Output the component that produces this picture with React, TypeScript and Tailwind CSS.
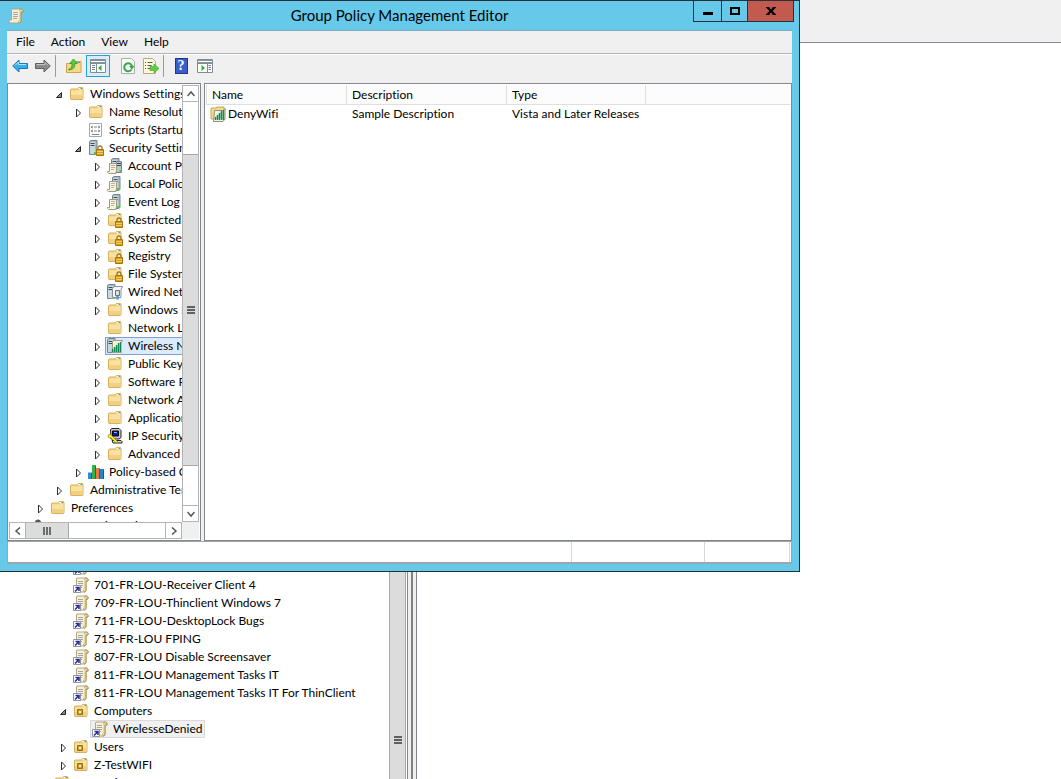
import type { ReactNode } from "react";

type IconName =
  | "folder" | "folderLock" | "script" | "security" | "account" | "server" | "wired"
  | "wireless" | "ipsec" | "qos" | "user" | "gpo" | "ou" | "scroll" | "wifiPolicy";

type Node = {
  label: string;
  icon: IconName;
  level: number;
  state?: "open" | "closed";
  selected?: boolean;
};

const Folder = () => (
  <>
    <path d="M1.500 3.500 2 3h6.500l1-1.500h4l.5 1.500V13l-.5.5H2l-.5-.5z" fill="#f3d582" stroke="#d8b05c" />
    <path d="M2 4.500h7.500l1-1H13.500V13H2z" fill="#f9e1a0" />
    <path d="M2 9h11.500v4H2z" fill="#f1d083" />
    <path d="M9.500 2h4v1h-4z" fill="#fffbe9" />
    <path d="M11.500 2h2v1h-2z" fill="#3c9be8" />
  </>
);

const Lock = () => (
  <>
    <path d="M10 10V8a2 2 0 0 1 4 0v2" fill="none" stroke="#a27a24" strokeWidth="1.300" />
    <path d="M8.500 9.500h7v6h-7z" fill="#d69b1c" stroke="#a8740c" />
    <path d="M9 11.500h6M9 13.500h6" stroke="#f3cf66" />
  </>
);

const Server = ({ x }: { x: number }) => (
  <g transform={`translate(${x} 0)`}>
    <path d="M.5 1.500 2 .5h6v13l-1.500 1h-6z" fill="#a9b9c5" stroke="#748591" />
    <path d="M1 2h5v12H1z" fill="#c9d7df" />
    <path d="M1.500 3.500h4M1.500 5.500h4" stroke="#394c5a" />
    <path d="M5 12h2v2H5z" fill="#35dc2e" />
  </g>
);

const Sheet = () => (
  <>
    <path d="M2.500 5.500h7v8H9v2H1.500l-1-1v-1h2z" fill="#f8f3df" stroke="#a09a82" />
    <path d="M4 7.500h4M4 9.500h4M4 11.500h3" stroke="#b9b39b" />
  </>
);

const Scroll = () => (
  <>
    <path d="M4 1h9.500l1.500 1v2h-2v9.500l-1 1.500H2l-1-1v-2h2.500V2z" fill="#f8f1d9" stroke="#b3a67c" />
    <path d="M11.500 2.500c0-2 3.500-2 3.500 0V4h-2v9c0 2.500-2.500 2.500-2.500.5" fill="#e5d6a0" stroke="#aa9557" />
    <path d="M5 4.500h5M5 6.500h5M5 8.500h5M5 10.500h4" stroke="#a3a3a3" />
  </>
);

const Bars = () => (
  <path d="M5.500 14v-3M7.500 14v-5M9.500 14V7M11.500 14V5M13.500 14V4" stroke="#188653" strokeWidth="1.400" />
);

const drawings: Record<IconName, ReactNode> = {
  folder: <Folder />,
  folderLock: <><Folder /><Lock /></>,
  script: (
    <>
      <path d="M1.500 1.500h12v13h-12z" fill="#fff" stroke="#a4a7ab" />
      <path d="M5 4 3 5l2 1m5-2 2 1-2 1M5 8 3 9l2 1m5-2 2 1-2 1M6 5h3M6 9h3M4 12.500h7" fill="none" stroke="#74787e" strokeWidth=".9" />
    </>
  ),
  security: <><Server x={1} /><Lock /></>,
  account: (
    <>
      <Server x={4} />
      <path d="M9.500 3.500h5v11h-5z" fill="#b8c8d2" stroke="#748591" />
      <path d="M10 5.500h4M10 7.500h4" stroke="#394c5a" />
      <path d="M12.500 12h2v2h-2z" fill="#35dc2e" />
      <Sheet />
    </>
  ),
  server: <><Server x={5} /><Sheet /></>,
  wired: (
    <>
      <Server x={0} />
      <path d="M5.500 4.500 7 2.500h8.500l-1.500 3v8H5.500z" fill="#f7f7f3" stroke="#8a9299" />
      <path d="M8.500 6.500h4v5h-4z" fill="#d5e3ec" stroke="#62717e" />
      <path d="M10.500 12v3.500" stroke="#4c9bd0" strokeWidth="2.500" />
      <path d="M3.500 14.500h5" stroke="#a5a28c" />
    </>
  ),
  wireless: (
    <>
      <Server x={0} />
      <path d="M5.500 3.500 7 2.500h8.500l-1 2v10h-9z" fill="#f5f3e2" stroke="#a29d80" />
      <path d="M5 13 15 4v10H5z" fill="#b9e2c4" />
      <Bars />
    </>
  ),
  wifiPolicy: (
    <>
      <path d="M1 2h5l1-1h7v12H1z" fill="#f5d98d" stroke="#c8a75d" />
      <path d="M4.500 4.500h9l1.500-2V13l-2 2.500H3.500z" fill="#f5f3e4" stroke="#8b907b" />
      <path d="M4 12 13 4v9H4z" fill="#b9e2c4" />
      <Bars />
    </>
  ),
  ipsec: (
    <>
      <path d="M3.500 1.500 5 .5h7l2 2v7l-2 1.500H4z" fill="#c9c9c9" stroke="#222" />
      <path d="M5.500 3h6v5h-6z" fill="#1616b8" stroke="#000" />
      <path d="M7 4.500h3" stroke="#5cc3ff" />
      <path d="M5 12.500h9l1 1v1.500H6z" fill="#dadada" stroke="#222" />
      <path d="m1 7 3-.5 1.500 2L11 14l-2 .7L4 10 1.500 9.500z" fill="#ffee20" stroke="#8c7c00" strokeWidth=".6" />
    </>
  ),
  qos: (
    <>
      <path d="M0 8.500h4V15H0z" fill="#2d8fd2" />
      <path d="M4 1h4v14H4z" fill="#35b34a" />
      <path d="M8 4h4v11H8z" fill="#ef7744" />
      <path d="M12 5h4v10h-4z" fill="#2286cf" />
      <path d="M3.500 9v6M7.500 2v13M11.500 5v10M15.500 6v9" stroke="#24445a" strokeOpacity=".7" />
    </>
  ),
  user: (
    <>
      <circle cx="7" cy="4.500" r="3" fill="#585858" />
      <path d="M2 15c0-9 11-9 11 0z" fill="#7492ac" />
    </>
  ),
  gpo: (
    <>
      <Scroll />
      <path d="M.5 8.500h7v7h-7z" fill="#fff" stroke="#8f94a4" />
      <path d="M2.500 10.500H6V14M5.500 11 2 14.500" fill="none" stroke="#29298c" strokeWidth="1.500" />
    </>
  ),
  ou: (
    <>
      <Folder />
      <path d="M4.500 6.500h5v5h-5z" fill="#c99d30" stroke="#92711b" />
      <path d="M6 8h2v2H6z" fill="#fff1b8" />
    </>
  ),
  scroll: <Scroll />,
};

function Icon({ name }: { name: IconName }) {
  return (
    <svg viewBox="0 0 16 16" className="size-4 shrink-0" aria-hidden="true">
      {drawings[name]}
    </svg>
  );
}

const policyTree: Node[] = [
  { label: "Windows Settings", icon: "folder", level: 2, state: "open" },
  { label: "Name Resolution Policy", icon: "folder", level: 3, state: "closed" },
  { label: "Scripts (Startup/Shutdown)", icon: "script", level: 3 },
  { label: "Security Settings", icon: "security", level: 3, state: "open" },
  { label: "Account Policies", icon: "account", level: 4, state: "closed" },
  { label: "Local Policies", icon: "server", level: 4, state: "closed" },
  { label: "Event Log", icon: "server", level: 4, state: "closed" },
  { label: "Restricted Groups", icon: "folderLock", level: 4, state: "closed" },
  { label: "System Services", icon: "folderLock", level: 4, state: "closed" },
  { label: "Registry", icon: "folderLock", level: 4, state: "closed" },
  { label: "File System", icon: "folderLock", level: 4, state: "closed" },
  { label: "Wired Network", icon: "wired", level: 4, state: "closed" },
  { label: "Windows Firewall", icon: "folder", level: 4, state: "closed" },
  { label: "Network List Manager", icon: "folder", level: 4 },
  { label: "Wireless Network", icon: "wireless", level: 4, state: "closed", selected: true },
  { label: "Public Key Policies", icon: "folder", level: 4, state: "closed" },
  { label: "Software Restriction", icon: "folder", level: 4, state: "closed" },
  { label: "Network Access", icon: "folder", level: 4, state: "closed" },
  { label: "Application Control", icon: "folder", level: 4, state: "closed" },
  { label: "IP Security Policies", icon: "ipsec", level: 4, state: "closed" },
  { label: "Advanced Audit", icon: "folder", level: 4, state: "closed" },
  { label: "Policy-based QoS", icon: "qos", level: 3, state: "closed" },
  { label: "Administrative Templates", icon: "folder", level: 2, state: "closed" },
  { label: "Preferences", icon: "folder", level: 1, state: "closed" },
  { label: "User Configuration", icon: "user", level: 0 },
];

const domainTree: Node[] = [
  { label: "", icon: "gpo", level: 3 },
  { label: "701-FR-LOU-Receiver Client 4", icon: "gpo", level: 3 },
  { label: "709-FR-LOU-Thinclient Windows 7", icon: "gpo", level: 3 },
  { label: "711-FR-LOU-DesktopLock Bugs", icon: "gpo", level: 3 },
  { label: "715-FR-LOU FPING", icon: "gpo", level: 3 },
  { label: "807-FR-LOU Disable Screensaver", icon: "gpo", level: 3 },
  { label: "811-FR-LOU Management Tasks IT", icon: "gpo", level: 3 },
  { label: "811-FR-LOU Management Tasks IT For ThinClient", icon: "gpo", level: 3 },
  { label: "Computers", icon: "ou", level: 3, state: "open" },
  { label: "WirelesseDenied", icon: "gpo", level: 4, selected: true },
  { label: "Users", icon: "ou", level: 3, state: "closed" },
  { label: "Z-TestWIFI", icon: "ou", level: 3, state: "closed" },
  { label: "Ho-Business EMA", icon: "ou", level: 2 },
];

const indents = ["pl-[5px]", "pl-[24px]", "pl-[43px]", "pl-[62px]", "pl-[81px]"];

function Tree({ nodes, label, active }: { nodes: Node[]; label: string; active?: boolean }) {
  const highlight = active ? "border-[#7da2ce] bg-[#dcebfc]" : "border-[#d9d9d9] bg-[#f0f0f0]";
  return (
    <ul aria-label={label}>
      {nodes.map((n, i) => (
        <li key={i} className={`flex h-[18px] whitespace-nowrap ${indents[n.level]}`}>
          <span className="flex w-4 shrink-0 items-center justify-center pt-0.5">
            {n.state && (
              <button aria-label={`${n.state === "open" ? "Collapse" : "Expand"} ${n.label}`}>
                <svg viewBox="0 0 8 10" className="h-2.5 w-2 overflow-visible" aria-hidden="true">
                  {n.state === "open" ? (
                    <path d="M6.500 2.500v5h-5z" fill="#8b8b8b" stroke="#262626" />
                  ) : (
                    <path d="m2.500 1 4 4-4 4z" fill="#fff" stroke="#2f2f2f" />
                  )}
                </svg>
              </button>
            )}
          </span>
          <span className={`flex items-center gap-[5px] border pr-0.5 pl-px ${n.selected ? highlight : "border-transparent"}`}>
            <Icon name={n.icon} />
            {n.label}
          </span>
        </li>
      ))}
    </ul>
  );
}

function Chevron({ d }: { d: string }) {
  return (
    <svg viewBox="0 0 8 8" className="size-2" aria-hidden="true">
      <path d={d} fill="none" stroke="#555" strokeWidth="1.500" />
    </svg>
  );
}

function Grip({ vertical }: { vertical?: boolean }) {
  return (
    <svg viewBox="0 0 8 8" className="size-2" aria-hidden="true">
      <path d={vertical ? "M1 0v8M4 0v8M7 0v8" : "M0 1h8M0 4h8M0 7h8"} stroke="#606060" strokeWidth="1.800" />
    </svg>
  );
}

const tool = "flex h-[22px] items-center justify-center";

function Toolbar() {
  return (
    <div className="flex h-[29px] items-start border-t border-white bg-[#f0f0f0] pl-[5px]">
      <button className={tool} aria-label="Back">
        <svg viewBox="0 0 16 16" className="size-4"><path d="M.7 8 7 2v3.500h8.500v5H7V14z" fill="#36aeea" stroke="#2573b8" /><path d="M3 7.500 6.500 4v2.500H14" fill="none" stroke="#a5e3ff" /></svg>
      </button>
      <button className={`${tool} ml-[7px]`} aria-label="Forward">
        <svg viewBox="0 0 16 16" className="size-4"><path d="M15.300 8 9 2v3.500H.5v5H9V14z" fill="#8b8b8b" stroke="#5f5f5f" /><path d="M1.500 6.500H10V4.500L13 7.500" fill="none" stroke="#c4c4c4" /></svg>
      </button>
      <span className="ml-1 h-[22px] w-px bg-[#9b9b9b]" />
      <button className={`${tool} ml-2.5`} aria-label="Up One Level">
        <svg viewBox="0 0 16 16" className="size-4"><path d="M.5 5.500h7l1.500-2h6v11H.5z" fill="#f5d98b" stroke="#cfa64f" /><path d="M11.500 4.500h2.500" stroke="#3c9be8" /><path d="M2.500 11.500c3-1 3.500-3 3.500-6H3.500L7.500 1l4 4.500H9c0 4-2 6.500-6.500 6.500z" fill="#55cb35" stroke="#2a9424" strokeWidth=".7" /></svg>
      </button>
      <button className="ml-1 flex h-[22px] w-6 items-center justify-center border border-[#26a0da] bg-[#d9ecf9]" aria-label="Show/Hide Console Tree" aria-pressed="true">
        <svg viewBox="0 0 16 14" className="h-3.5 w-4"><path d="M.5.5h15v13H.5z" fill="#fff" stroke="#828b94" /><path d="M1 1.500h14M1 3.500h14" stroke="#8795a3" /><path d="M1 4.500h14M6.500 5v8" stroke="#828b94" /><path d="M2 6.500h3M2 8.500h3M2 10.500h3" stroke="#6e8296" /><path d="M11.500 6v6L8 9z" fill="#35ad2d" /></svg>
      </button>
      <button className={`${tool} ml-2.5`} aria-label="Refresh">
        <svg viewBox="0 0 16 16" className="size-4"><path d="M1.500.5h10l3 3v12h-13z" fill="#fdfdfd" stroke="#adadad" /><path d="M11.500 11.500A4 4 0 1 1 12 8" fill="none" stroke="#35a947" strokeWidth="2" /><path d="m9 8 5.500-.2-2.500 4z" fill="#35a947" /></svg>
      </button>
      <button className={`${tool} ml-[7px]`} aria-label="Export List">
        <svg viewBox="0 0 16 16" className="size-4"><path d="M.5.5h9l3 3v12H.5z" fill="#fff9dc" stroke="#b5aa87" /><path d="M2 4.500h1M2 7.500h1M2 10.500h1M4.500 4.500h5M4.500 7.500h4M4.500 10.500h3" stroke="#585858" /><path d="M7 8.500h4V6l5 4.500-5 4.500v-2.500H7z" fill="#63cd3f" stroke="#3d9e2a" strokeWidth=".6" /></svg>
      </button>
      <span className="ml-1 h-[22px] w-px bg-[#9b9b9b]" />
      <button className="ml-2.5 flex h-[22px] w-3.5 items-center justify-center" aria-label="Help">
        <span className="flex h-4 w-[13px] items-center justify-center border border-[#1f3591] bg-[#3a5fcd] font-['Liberation_Serif',serif] text-sm font-bold text-white">?</span>
      </button>
      <button className={`${tool} ml-[9px]`} aria-label="Show/Hide Action Pane">
        <svg viewBox="0 0 16 14" className="h-3.5 w-4"><path d="M.5.5h15v13H.5z" fill="#fff" stroke="#828b94" /><path d="M1 1.500h14M1 3.500h14" stroke="#8795a3" /><path d="M1 4.500h14M10.500 5v8" stroke="#828b94" /><path d="M11.500 6.500H14M11.500 8.500H14M11.500 10.500H14" stroke="#6e8296" /><path d="M4.500 6v6L8 9z" fill="#35ad2d" /></svg>
      </button>
    </div>
  );
}

function TreePane() {
  const arrow = "flex shrink-0 items-center justify-center border border-[#b4b4b4] bg-white";
  return (
    <nav className="grid w-[194px] shrink-0 grid-cols-[minmax(0,1fr)_17px] grid-rows-[minmax(0,1fr)_17px] border border-[#828790] bg-white pt-px pr-px pb-px">
      <div className="overflow-hidden">
        <Tree nodes={policyTree} label="Policy" active />
      </div>
      <div className="flex flex-col border-x border-[#b4b4b4] bg-white">
        <button className={`${arrow} h-[17px] border-x-0`} aria-label="Scroll up"><Chevron d="m.5 6 3.500-4 3.500 4" /></button>
        <div className="mt-[52px] flex h-[312px] items-center justify-center border-y border-[#a8a8a8] bg-[#dcdcdc]"><Grip /></div>
        <button className={`${arrow} mt-auto h-[17px] border-x-0`} aria-label="Scroll down"><Chevron d="m.5 2 3.500 4 3.500-4" /></button>
      </div>
      <div className="ml-px flex border-y border-[#b4b4b4]">
        <button className={`${arrow} w-[17px] border-y-0`} aria-label="Scroll left"><Chevron d="M6 .5 2 4l4 3.500" /></button>
        <div className="flex w-[43px] items-center justify-center border-r border-[#a8a8a8] bg-[#dcdcdc]"><Grip vertical /></div>
        <button className={`${arrow} ml-auto w-[17px] border-y-0`} aria-label="Scroll right"><Chevron d="m2 .5 4 3.500-4 3.500" /></button>
      </div>
      <div className="bg-[#f0f0f0]" />
    </nav>
  );
}

function PolicyList() {
  const head = "h-5 border-r border-b border-[#dfdfdf] pl-[5px] text-left font-normal";
  return (
    <div className="min-w-0 flex-1 border border-[#828790] bg-white p-px">
      <table className="w-full table-fixed border-separate border-spacing-0">
        <thead className="bg-[#fcfcfc]">
          <tr>
            <th className={`${head} w-[141px] border-l`}>Name</th>
            <th className={`${head} w-[160px]`}>Description</th>
            <th className={`${head} w-[139px]`}>Type</th>
            <th className="border-b border-[#dfdfdf]" />
          </tr>
        </thead>
        <tbody>
          <tr className="h-[18px]">
            <td className="p-0 pl-1"><span className="flex items-center gap-0.5"><Icon name="wifiPolicy" />DenyWifi</span></td>
            <td className="p-0 pl-[5px]">Sample Description</td>
            <td className="p-0 pl-[5px]">Vista and Later Releases</td>
            <td />
          </tr>
        </tbody>
      </table>
    </div>
  );
}

function EditorWindow() {
  const caption = "flex h-[21px] items-center justify-center border border-t-0 border-[#27303c]";
  return (
    <section className="absolute top-0 left-0 flex h-[572px] w-[800px] flex-col border border-l-0 border-[#2a2e38] bg-[#66c9e9]">
      <header className="grid h-[29px] grid-cols-[1fr_auto_1fr]">
        <div className="self-center pl-2"><Icon name="scroll" /></div>
        <h1 className="self-center pb-0.5 text-[15px] leading-5">Group Policy Management Editor</h1>
        <div className="mr-[5px] flex self-start justify-self-end">
          <button className={`${caption} w-7 border-r-0`} aria-label="Minimize"><span className="mt-1 h-[3px] w-2.5 bg-black" /></button>
          <button className={`${caption} w-[26px] border-r-0`} aria-label="Maximize"><span className="h-2 w-2.5 border-2 border-black" /></button>
          <button className={`${caption} w-[47px] bg-[#c35a50]`} aria-label="Close">
            <svg viewBox="0 0 10 8" className="h-2 w-2.5" aria-hidden="true"><path d="M1.500.5 8.500 7.500M8.500.5 1.500 7.500" stroke="#000" strokeWidth="2.200" /><path d="M0 .5h3.500M6.500.5H10M0 7.500h3.500M6.500 7.500H10" stroke="#000" /></svg>
          </button>
        </div>
      </header>
      <div className="mr-[7px] mb-[7px] ml-[7px] flex min-h-0 flex-1 flex-col border-t border-[#84a9bd] bg-[#f0f0f0]">
        <div className="flex h-[23px] items-center border-b border-[#b1b4bb] px-px">
          {["File", "Action", "View", "Help"].map((m) => (
            <button key={m} className="px-2">{m}</button>
          ))}
        </div>
        <Toolbar />
        <main className="flex min-h-0 flex-1 gap-[3px]">
          <TreePane />
          <PolicyList />
        </main>
        <footer className="flex h-[23px] border border-b-2 border-[#a0a3a8] bg-white">
          <span className="flex-1 border-r border-[#d7d7d7]" />
          <span className="w-[133px] border-r border-[#d7d7d7]" />
          <span className="mr-px w-[85px] border-r border-[#d7d7d7]" />
        </footer>
      </div>
    </section>
  );
}

export default function App() {
  return (
    <div className="relative flex h-screen flex-col overflow-hidden bg-white font-['Lato','Liberation_Sans',sans-serif] text-xs leading-4 text-black [font-variant-ligatures:none]">
      <div className="h-[43px] shrink-0 border-b border-[#8d8796] bg-[#f0f0f0]" />
      <div className="flex min-h-0 flex-1">
        <nav className="flex w-[408px] shrink-0 border-r border-[#828790]">
          <div className="min-w-0 flex-1 overflow-hidden pt-[515px]">
            <div className="-ml-[7px]"><Tree nodes={domainTree} label="Domain" /></div>
          </div>
          <div className="mr-px flex w-[17px] flex-col items-center justify-end border-x border-[#a8a8a8] bg-[#dcdcdc] pb-[35px]"><Grip /></div>
        </nav>
        <div className="flex w-2 shrink-0 justify-center bg-[#f0f0f0]"><span className="w-0.5 bg-[#828282]" /></div>
        <main className="flex-1 border-l border-[#828790]" />
      </div>
      <EditorWindow />
    </div>
  );
}
